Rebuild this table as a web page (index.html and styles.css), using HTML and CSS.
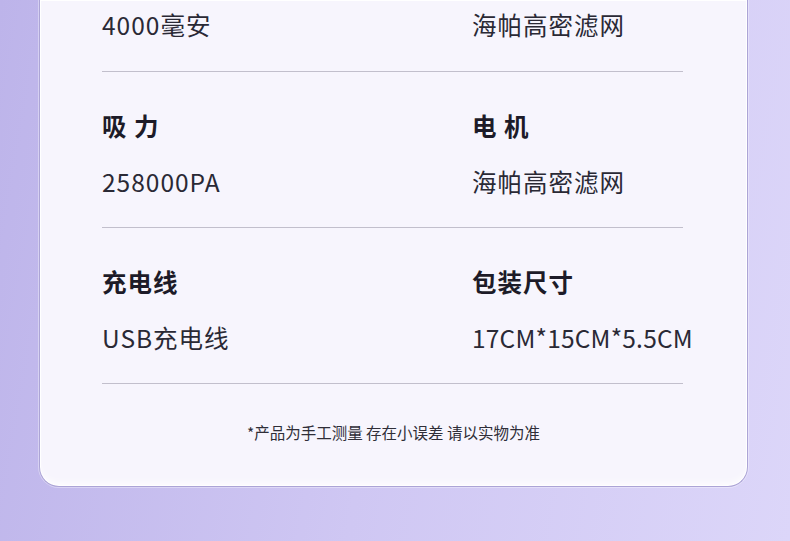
FILE: index.html
```html
<!DOCTYPE html>
<html lang="zh-CN">
<head>
  <meta charset="UTF-8">
  <meta name="viewport" content="width=device-width, initial-scale=1.0">
  <title>产品参数</title>
  <link rel="stylesheet" href="styles.css">
</head>
<body>

  <div class="card">
    <div class="row first">
      <div class="cell"><div class="value">4000毫安</div></div>
      <div class="cell"><div class="value">海帕高密滤网</div></div>
    </div>

    <div class="row">
      <div class="cell">
        <div class="label">吸 力</div>
        <div class="value">258000PA</div>
      </div>
      <div class="cell">
        <div class="label">电 机</div>
        <div class="value">海帕高密滤网</div>
      </div>
    </div>

    <div class="row">
      <div class="cell">
        <div class="label">充电线</div>
        <div class="value">USB充电线</div>
      </div>
      <div class="cell">
        <div class="label">包装尺寸</div>
        <div class="value size">17CM*15CM*5.5CM</div>
      </div>
    </div>

    <p class="note">*产品为手工测量 存在小误差 请以实物为准</p>
  </div>

</body>
</html>
```

FILE: styles.css
```css
body {
  margin: 0;
  height: 541px;
  overflow: hidden;
  font-family: "Noto Sans CJK SC", "Noto Sans", sans-serif;
  background: linear-gradient(100deg, #bdb4ea 0%, #cfc7f3 50%, #dcd6f9 100%);
}
.card {
  margin-left: 39px;
  width: 709px;
  box-sizing: border-box;
  padding: 8px 0 0 62px;
  background: #f7f5fd;
  border: 1px solid #aca4d6;
  border-top: none;
  border-radius: 0 0 20px 20px;
  box-shadow: inset 0 0 0 1px #ffffff, inset 0 -6px 8px -4px #ffffff, 0 0 0 1px rgba(255, 255, 255, 0.35);
}
.row {
  display: grid;
  grid-template-columns: 370px 211px;
  width: 581px;
  padding: 37px 0 28px;
  border-bottom: 1px solid #c2bfcc;
}
.row.first {
  padding: 0 0 29px;
}
.label {
  font-size: 24.5px;
  line-height: 34px;
  font-weight: bold;
  color: #1d1b28;
  letter-spacing: 1px;
  white-space: nowrap;
}
.value {
  margin-top: 22px;
  font-size: 24.5px;
  line-height: 34px;
  color: #2a2935;
  letter-spacing: 1px;
  white-space: nowrap;
}
.value.size {
  letter-spacing: 0.2px;
}
.first .value {
  margin-top: 0;
}
.note {
  margin: 0;
  padding: 38px 62px 44px 0;
  text-align: center;
  font-size: 15.5px;
  line-height: 20px;
  color: #2f2e38;
}
```
